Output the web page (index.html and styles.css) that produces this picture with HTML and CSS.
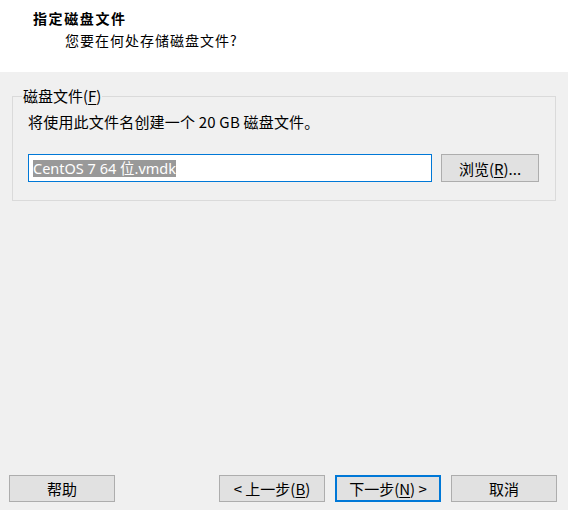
FILE: index.html
```html
<!DOCTYPE html>
<html lang="zh-CN">
<head>
<meta charset="utf-8">
<link rel="stylesheet" href="styles.css">
</head>
<body>
<div class="window">
  <div class="header">
    <div class="title">指定磁盘文件</div>
    <div class="subtitle">您要在何处存储磁盘文件?</div>
  </div>
  <div class="main">
    <fieldset class="group">
      <legend>磁盘文件(<u>F</u>)</legend>
      <div class="desc">将使用此文件名创建一个 20 GB 磁盘文件。</div>
      <div class="row">
        <div class="input"><span class="sel">CentOS 7 64 位.vmdk</span></div>
        <div class="btn browse">浏览(<u>R</u>)...</div>
      </div>
    </fieldset>
  </div>
  <div class="footer">
    <div class="btn">帮助</div>
    <div class="nav">
      <div class="btn">&lt; 上一步(<u>B</u>)</div>
      <div class="btn primary">下一步(<u>N</u>) &gt;</div>
      <div class="btn">取消</div>
    </div>
  </div>
</div>
</body>
</html>
```
FILE: styles.css
```css
html, body {
  margin: 0;
  padding: 0;
  background: #f0f0f0;
}
body {
  font-family: "Noto Sans CJK SC", "Noto Sans", sans-serif;
  font-size: 15px;
  color: #000;
}
.window {
  width: 568px;
  height: 510px;
  display: flex;
  flex-direction: column;
}
.header {
  height: 72px;
  box-sizing: border-box;
  background: #fff;
  padding: 7px 0 0 33px;
}
.title {
  font-weight: bold;
  font-size: 14px;
  letter-spacing: 1.6px;
  line-height: 22px;
}
.subtitle {
  padding-left: 32px;
  font-size: 14px;
  letter-spacing: 1px;
  line-height: 22px;
}
.main {
  flex: 1;
  padding: 15px 12px 0 12px;
}
.group {
  margin: 0;
  border: 1px solid #dadada;
  padding: 7px 14px 0 15px;
  height: 114px;
  box-sizing: border-box;
}
.group legend {
  padding: 0 1px;
  margin-left: -6px;
  line-height: 18px;
}
.desc {
  line-height: 20px;
  letter-spacing: 0.2px;
}
.row {
  display: flex;
  align-items: center;
  margin-top: 22px;
  gap: 9px;
}
.input {
  width: 404px;
  height: 28px;
  box-sizing: border-box;
  border: 1px solid #0078d7;
  background: #fff;
  display: flex;
  align-items: center;
  padding-left: 4px;
}
.sel {
  background: #999999;
  color: #fff;
  font-family: "Noto Sans", "Noto Sans CJK SC", sans-serif;
  font-size: 14.5px;
  line-height: 17px;
}
.btn {
  width: 106px;
  height: 27px;
  box-sizing: border-box;
  border: 1px solid #adadad;
  background: #e1e1e1;
  display: flex;
  align-items: center;
  justify-content: center;
  line-height: 1;
}
.btn.browse {
  width: 98px;
  height: 28px;
}
.btn.primary {
  border: 2px solid #0078d7;
}
u {
  text-underline-offset: 2px;
}
.footer {
  display: flex;
  justify-content: space-between;
  padding: 0 11px 8px 9px;
}
.nav {
  display: flex;
  gap: 10px;
}
```
